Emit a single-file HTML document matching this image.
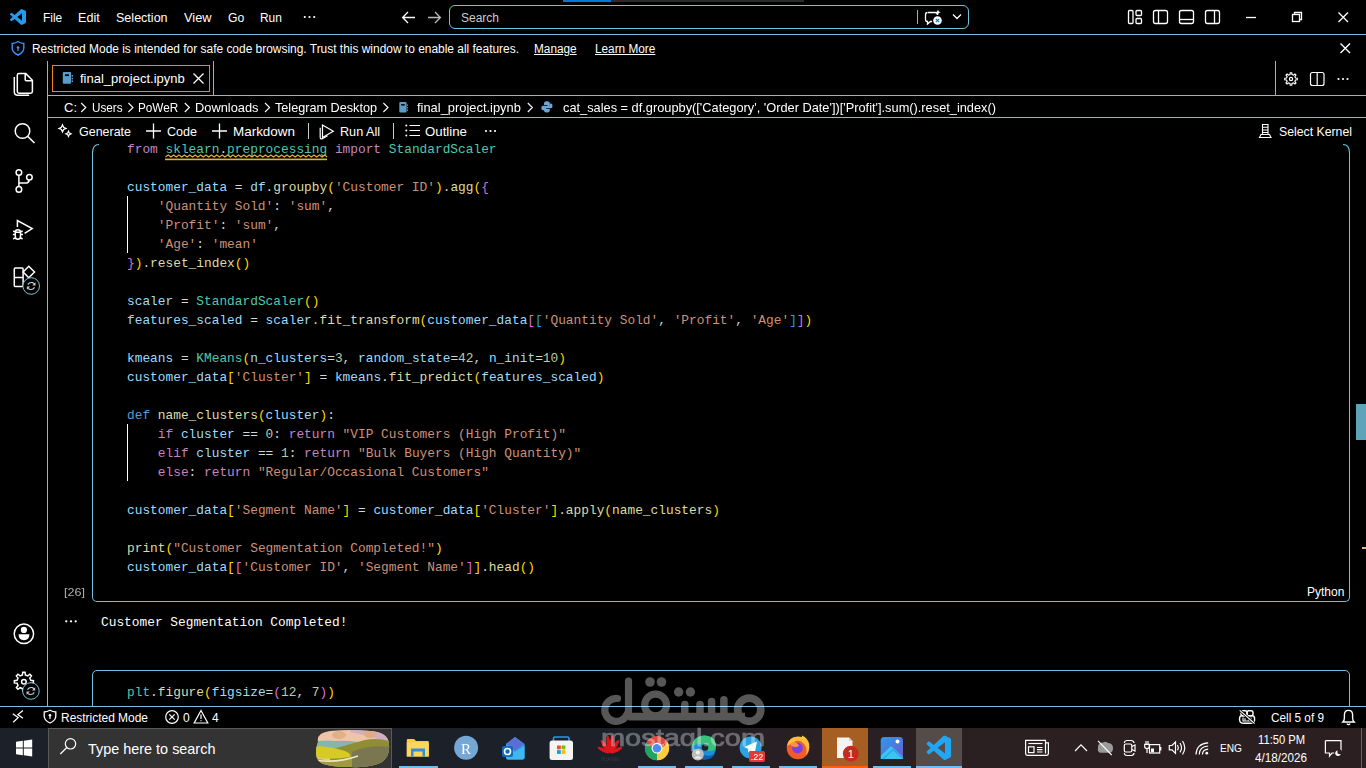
<!DOCTYPE html>
<html><head><meta charset="utf-8">
<style>
*{margin:0;padding:0;box-sizing:border-box}
html,body{width:1366px;height:768px;overflow:hidden;background:#000}
body{position:relative;font-family:"Liberation Sans",sans-serif;color:#fff;font-size:13px}
.a{position:absolute}
.hl{position:absolute;height:1px;background:#6fc3df}
.vl{position:absolute;width:1px;background:#6fc3df}
.t{position:absolute;white-space:pre;line-height:1}
.code{position:absolute;left:127px;font-family:"Liberation Mono",monospace;font-size:12.83px;line-height:19px;white-space:normal;color:#d4d4d4}
.code div{height:19px;white-space:pre}
.kw{color:#c586c0}.cl{color:#4ec9b0}.v{color:#9cdcfe}.fn{color:#dcdcaa}.s{color:#ce9178}.n{color:#b5cea8}.d{color:#569cd6}
.b1{color:#ffd700}.b2{color:#da70d6}.b3{color:#179fff}
svg{position:absolute;overflow:visible}
</style></head><body>

<!-- ===== TITLE BAR ===== -->
<div class="hl" style="left:0;top:34px;width:1366px"></div>
<div class="a" style="left:563px;top:0;width:241px;height:2px;background:#2b2b2b"></div>
<div class="a" style="left:563px;top:0;width:48px;height:2px;background:#0078d4"></div>

<div class="t" style="transform:scaleX(0.9163);transform-origin:0 0;left:43px;top:11px;font-size:13px">File</div>
<div class="t" style="transform:scaleX(0.9685);transform-origin:0 0;left:78px;top:11px;font-size:13px">Edit</div>
<div class="t" style="transform:scaleX(0.9648);transform-origin:0 0;left:116px;top:11px;font-size:13px">Selection</div>
<div class="t" style="transform:scaleX(0.9838);transform-origin:0 0;left:184px;top:11px;font-size:13px">View</div>
<div class="t" style="transform:scaleX(0.9398);transform-origin:0 0;left:228px;top:11px;font-size:13px">Go</div>
<div class="t" style="transform:scaleX(0.9179);transform-origin:0 0;left:260px;top:11px;font-size:13px">Run</div>

<!-- search box -->
<div class="a" style="left:449px;top:5px;width:520px;height:24px;border:1px solid #6fc3df;border-radius:6px"></div>
<div class="t" style="left:461px;top:12px;font-size:12px;color:#ccc">Search</div>
<div class="a" style="left:917px;top:10px;width:1px;height:14px;background:#6fc3df"></div>

<!-- ===== BANNER ===== -->
<div class="t" style="transform:scaleX(0.9947);transform-origin:0 0;left:32px;top:43px;font-size:12px">Restricted Mode is intended for safe code browsing. Trust this window to enable all features.</div>
<div class="t" style="transform:scaleX(0.9844);transform-origin:0 0;left:534px;top:43px;font-size:12px;text-decoration:underline">Manage</div>
<div class="t" style="transform:scaleX(0.9825);transform-origin:0 0;left:595px;top:43px;font-size:12px;text-decoration:underline">Learn More</div>

<!-- ===== EDITOR FRAME ===== -->
<div class="vl" style="left:47px;top:61px;height:645px"></div>
<div class="hl" style="left:47px;top:95px;width:1319px"></div>
<div class="hl" style="left:47px;top:117px;width:1319px"></div>
<div class="vl" style="left:213px;top:61px;height:34px"></div>
<div class="vl" style="left:1275px;top:61px;height:34px"></div>

<!-- tab -->
<div class="a" style="left:52px;top:65px;width:158px;height:27px;border:1px solid #f38518"></div>
<div class="t" style="transform:scaleX(0.9991);transform-origin:0 0;left:80px;top:72px;font-size:13px">final_project.ipynb</div>

<!-- breadcrumb -->
<div class="t" style="left:64px;top:101px;font-size:13px;color:#fff">C:</div>

<!-- toolbar -->
<div class="t" style="transform:scaleX(0.9594);transform-origin:0 0;left:79px;top:125px">Generate</div>
<div class="t" style="transform:scaleX(0.9653);transform-origin:0 0;left:167px;top:125px">Code</div>
<div class="t" style="transform:scaleX(1.0339);transform-origin:0 0;left:233px;top:125px">Markdown</div>
<div class="a" style="left:308px;top:123px;width:1px;height:16px;background:#ccc"></div>
<div class="t" style="transform:scaleX(0.9708);transform-origin:0 0;left:340px;top:125px">Run All</div>
<div class="a" style="left:393px;top:123px;width:1px;height:16px;background:#ccc"></div>
<div class="t" style="transform:scaleX(1.0193);transform-origin:0 0;left:425px;top:125px">Outline</div>
<div class="t" style="transform:scaleX(0.9440);transform-origin:0 0;left:1279px;top:125px">Select Kernel</div>

<!-- ===== NOTEBOOK ===== -->
<div class="a" style="left:48px;top:144px;width:1318px;height:562px;overflow:hidden">
  <div class="a" style="left:44px;top:9px;width:1258px;height:449px;border:1px solid #6fc3df;border-top:none;border-radius:0 0 5px 5px"></div>
  <div class="a" style="left:44px;top:526px;width:1258px;height:100px;border:1px solid #6fc3df;border-radius:5px"></div>
  <div class="code" style="left:79px;top:-4px">
<div><span class="kw">from</span> <span class="cl">sklearn</span>.<span class="cl">preprocessing</span> <span class="kw">import</span> <span class="cl">StandardScaler</span></div>
<div></div>
<div><span class="v">customer_data</span> = <span class="v">df</span>.<span class="fn">groupby</span><span class="b1">(</span><span class="s">'Customer ID'</span><span class="b1">)</span>.<span class="fn">agg</span><span class="b1">(</span><span class="b2">{</span></div>
<div>    <span class="s">'Quantity Sold'</span>: <span class="s">'sum'</span>,</div>
<div>    <span class="s">'Profit'</span>: <span class="s">'sum'</span>,</div>
<div>    <span class="s">'Age'</span>: <span class="s">'mean'</span></div>
<div><span class="b2">}</span><span class="b1">)</span>.<span class="fn">reset_index</span><span class="b1">()</span></div>
<div></div>
<div><span class="v">scaler</span> = <span class="cl">StandardScaler</span><span class="b1">()</span></div>
<div><span class="v">features_scaled</span> = <span class="v">scaler</span>.<span class="fn">fit_transform</span><span class="b1">(</span><span class="v">customer_data</span><span class="b2">[</span><span class="b3">[</span><span class="s">'Quantity Sold'</span>, <span class="s">'Profit'</span>, <span class="s">'Age'</span><span class="b3">]</span><span class="b2">]</span><span class="b1">)</span></div>
<div></div>
<div><span class="v">kmeans</span> = <span class="cl">KMeans</span><span class="b1">(</span><span class="v">n_clusters</span>=<span class="n">3</span>, <span class="v">random_state</span>=<span class="n">42</span>, <span class="v">n_init</span>=<span class="n">10</span><span class="b1">)</span></div>
<div><span class="v">customer_data</span><span class="b1">[</span><span class="s">'Cluster'</span><span class="b1">]</span> = <span class="v">kmeans</span>.<span class="fn">fit_predict</span><span class="b1">(</span><span class="v">features_scaled</span><span class="b1">)</span></div>
<div></div>
<div><span class="d">def</span> <span class="fn">name_clusters</span><span class="b1">(</span><span class="v">cluster</span><span class="b1">)</span>:</div>
<div>    <span class="kw">if</span> <span class="v">cluster</span> == <span class="n">0</span>: <span class="kw">return</span> <span class="s">"VIP Customers (High Profit)"</span></div>
<div>    <span class="kw">elif</span> <span class="v">cluster</span> == <span class="n">1</span>: <span class="kw">return</span> <span class="s">"Bulk Buyers (High Quantity)"</span></div>
<div>    <span class="kw">else</span>: <span class="kw">return</span> <span class="s">"Regular/Occasional Customers"</span></div>
<div></div>
<div><span class="v">customer_data</span><span class="b1">[</span><span class="s">'Segment Name'</span><span class="b1">]</span> = <span class="v">customer_data</span><span class="b1">[</span><span class="s">'Cluster'</span><span class="b1">]</span>.<span class="fn">apply</span><span class="b1">(</span><span class="fn">name_clusters</span><span class="b1">)</span></div>
<div></div>
<div><span class="fn">print</span><span class="b1">(</span><span class="s">"Customer Segmentation Completed!"</span><span class="b1">)</span></div>
<div><span class="v">customer_data</span><span class="b1">[</span><span class="b2">[</span><span class="s">'Customer ID'</span>, <span class="s">'Segment Name'</span><span class="b2">]</span><span class="b1">]</span>.<span class="fn">head</span><span class="b1">()</span></div>
  </div>
  <!-- indent guides -->
  <div class="a" style="left:79px;top:52px;width:1px;height:57px;background:#fff"></div>
  <div class="a" style="left:79px;top:280px;width:1px;height:57px;background:#fff"></div>
  <div class="t" style="transform:scaleX(1.0945);transform-origin:0 0;left:64px;top:587px;font-family:'Liberation Sans',sans-serif;font-size:11.5px;color:#b0b0b0;position:fixed">[26]</div>
  <div class="t" style="left:1259px;top:442px;font-size:12px;color:#fff">Python</div>
  
  <div class="t" style="left:53px;top:473px;font-family:'Liberation Mono',monospace;font-size:12.83px;color:#fff">Customer Segmentation Completed!</div>
  <div class="code" style="left:79px;top:539px"><div><span class="cl">plt</span>.<span class="fn">figure</span><span class="b1">(</span><span class="v">figsize</span>=<span class="b2">(</span><span class="n">12</span>, <span class="n">7</span><span class="b2">)</span><span class="b1">)</span></div></div>
</div>

<!-- ===== STATUS BAR ===== -->
<div class="hl" style="left:0;top:706px;width:1366px"></div>
<div class="t" style="transform:scaleX(0.9957);transform-origin:0 0;left:61px;top:712px;font-size:12px">Restricted Mode</div>
<div class="t" style="left:183px;top:712px;font-size:12px">0</div>
<div class="t" style="left:212px;top:712px;font-size:12px">4</div>
<div class="t" style="transform:scaleX(0.9809);transform-origin:0 0;left:1271px;top:712px;font-size:12px">Cell 5 of 9</div>

<!-- ===== TASKBAR ===== -->
<div class="a" style="left:0;top:728px;width:1366px;height:40px;background:linear-gradient(90deg,#1b2029 0%,#1c2029 46%,#2a1f22 60%,#2c1f21 100%)"></div>
<div class="a" style="left:48px;top:728px;width:344px;height:40px;background:#333;border:1px solid #595959;border-bottom:none"></div>
<div class="t" style="transform:scaleX(0.9609);transform-origin:0 0;left:88px;top:741px;font-size:15px;color:#fff">Type here to search</div>


<!-- ===== ICONS LAYER 1 ===== -->
<svg style="left:0;top:0" width="1366" height="728" viewBox="0 0 1366 728">
<!-- VS Code logo -->
<path transform="translate(10 9) scale(0.16)" fill="#1f9cf0" d="M96.46 10.8 75.86.87a6.23 6.23 0 0 0-7.1 1.2L29.33 38.04 12.15 25a4.16 4.16 0 0 0-5.32.24L1.3 30.26a4.16 4.16 0 0 0 0 6.16L16.2 50 1.3 63.58a4.16 4.16 0 0 0 0 6.16l5.52 5.02a4.16 4.16 0 0 0 5.32.24l17.18-13.04 39.43 35.96a6.23 6.23 0 0 0 7.1 1.2l20.6-9.92a6.24 6.24 0 0 0 3.54-5.62V16.42a6.24 6.24 0 0 0-3.54-5.62zM75.02 72.7 45.1 50l29.92-22.7z"/>
<g fill="none" stroke="#fff" stroke-width="1.3">
<!-- nav arrows -->
<path d="M408 12 L402.6 17.5 L408 23 M402.6 17.5 H415"/>
<path d="M435 12 L440.4 17.5 L435 23 M428 17.5 H440.4" stroke="#bbb"/>
<!-- copilot -->
<path d="M928 12.5 H935 Q937.5 12.5 937.5 15 M927.5 12.5 Q925.5 12.5 925.5 15 V19.5 Q925.5 21.5 927.5 21.5 V24 L930.5 21.5 H932"/>
<path d="M938 9.5 L938.8 11.5 L940.8 12.2 L938.8 13 L938 15 L937.2 13 L935.2 12.2 L937.2 11.5Z" fill="#fff" stroke="none"/>
<circle cx="937.5" cy="20.5" r="4.3" fill="#fff" stroke="none"/>
<path d="M935.8 18.8 L939.2 22.2 M939.2 18.8 L935.8 22.2" stroke="#1a6fb5" stroke-width="1.1"/>
<path d="M953 14.5 L957 18.5 L961 14.5"/>
<!-- layout icons -->
<rect x="1128.5" y="10.5" width="4.5" height="13" rx="1"/>
<rect x="1136" y="10.5" width="5.5" height="5" rx="1"/>
<rect x="1136" y="18.5" width="5.5" height="5" rx="1"/>
<rect x="1153.5" y="10.5" width="14" height="13" rx="2"/><path d="M1158.5 10.5 V23.5"/>
<rect x="1179.5" y="10.5" width="14" height="13" rx="2"/><path d="M1179.5 19.5 H1193.5"/>
<rect x="1205.5" y="10.5" width="14" height="13" rx="2"/><path d="M1214.5 10.5 V23.5"/>
<!-- window controls -->
<path d="M1246 17.5 H1256"/>
<rect x="1292.5" y="14.5" width="7" height="7"/>
<path d="M1294.5 14.5 V12.5 H1301.5 V19.5 H1299.5"/>
<path d="M1338.5 12.5 L1348 22 M1348 12.5 L1338.5 22"/>
<!-- banner close -->
<path d="M1340.5 43.5 L1350 53 M1350 43.5 L1340.5 53" stroke-width="1.4"/>
</g>
<!-- banner shield -->
<path d="M18 41.5 Q21 43.5 23.8 43.5 V48 Q23.8 52.5 18 55 Q12.2 52.5 12.2 48 V43.5 Q15 43.5 18 41.5Z" fill="none" stroke="#3794ff" stroke-width="1.4"/>
<circle cx="18" cy="47.5" r="1.3" fill="#3794ff"/><path d="M18 48 V51" stroke="#3794ff" stroke-width="1.2"/>

<!-- ACTIVITY BAR -->
<g fill="none" stroke="#fff" stroke-width="1.5">
<path d="M25.8 73.6 H19 Q17.3 73.6 17.3 75.3 V91.5 Q17.3 93.2 19 93.2 H30.8 Q32.4 93.2 32.4 91.5 V80.2 Z M25.2 73.8 V79.5 Q25.2 80.8 26.5 80.8 H32.3"/>
<path d="M14.3 77 V91.8 Q14.3 95.3 17.8 95.3 H29.2"/>
<circle cx="22.5" cy="131" r="7.3"/><path d="M27.6 136.2 L34.5 143" stroke-width="1.6"/>
<circle cx="18.9" cy="172.5" r="2.8"/><circle cx="18.9" cy="189.4" r="2.8"/><circle cx="29.4" cy="177.2" r="2.8"/>
<path d="M18.9 175.1 V186.8 M19.5 182.9 H26.5 Q28.8 182.9 29.2 179.8"/>
<path d="M17.4 227 V220.6 L32.2 228.6 L24.6 233.4"/>
<path d="M15.3 232.5 Q15.3 229.8 17.9 229.8 Q20.5 229.8 20.5 232.5 V236.5 Q20.5 239.3 17.9 239.3 Q15.3 239.3 15.3 236.5Z M15.3 232.2 H20.5 M12.8 234.5 H15 M20.8 234.5 H23 M13.2 231 L15.4 232 M22.6 231 L20.4 232 M13.2 239 L15.4 237.7 M22.6 239 L20.4 237.7"/>
<rect x="14.3" y="268" width="8.8" height="18.6" rx="1"/><path d="M14.3 277.5 H23.1"/>
<path d="M28.8 266.3 L34.5 272 L28.8 277.7 L23.1 272Z"/>
<circle cx="23.9" cy="633.8" r="9.7"/>
<circle cx="23.9" cy="629.9" r="3.1" fill="#fff" stroke="none"/>
<path d="M18.6 634.3 H29.4 Q29.4 640.2 23.9 640.2 Q18.6 640.2 18.6 634.3Z" fill="#fff" stroke="none"/>
<path d="M30.74 680.30 L33.43 680.67 L33.43 682.93 L30.74 683.30 L29.80 685.57 L31.44 687.74 L29.84 689.34 L27.67 687.70 L25.40 688.64 L25.03 691.33 L22.77 691.33 L22.40 688.64 L20.13 687.70 L17.96 689.34 L16.36 687.74 L18.00 685.57 L17.06 683.30 L14.37 682.93 L14.37 680.67 L17.06 680.30 L18.00 678.03 L16.36 675.86 L17.96 674.26 L20.13 675.90 L22.40 674.96 L22.77 672.27 L25.03 672.27 L25.40 674.96 L27.67 675.90 L29.84 674.26 L31.44 675.86 L29.80 678.03Z"/>
<circle cx="23.9" cy="681.8" r="2.3"/>
</g>
<!-- sync badges -->
<g>
<circle cx="31.2" cy="286" r="8.3" fill="#000" stroke="#6fc3df" stroke-width="1"/>
<circle cx="30.9" cy="691" r="8.3" fill="#000" stroke="#6fc3df" stroke-width="1"/>
<g fill="none" stroke="#ccc" stroke-width="1.1">
<path d="M27.8 284.6 Q29.5 282 32.5 282.6 Q34 283 34.8 284.3 M34.6 287.4 Q33 290 30 289.4 Q28.4 289 27.6 287.7"/>
<path d="M27.5 689.6 Q29.2 687 32.2 687.6 Q33.7 688 34.5 689.3 M34.3 692.4 Q32.7 695 29.7 694.4 Q28.1 694 27.3 692.7"/>
</g>
<g fill="#ccc"><path d="M35.5 282.3 V285.5 H32.3Z M26.9 289.7 V286.5 H30.1Z M35.2 687.3 V690.5 H32Z M26.6 694.7 V691.5 H29.8Z"/></g>
</g>

<!-- TAB -->
<rect x="62.8" y="72.1" width="8.3" height="11.7" rx="1" fill="#5b9bc9"/>
<rect x="65" y="74.3" width="4" height="1.8" fill="#000"/>
<g fill="#5b9bc9"><rect x="71.6" y="75" width="1.4" height="1.6"/><rect x="71.6" y="77.8" width="1.4" height="1.6"/><rect x="71.6" y="80.4" width="1.4" height="1.6"/></g>
<path d="M193.5 73.5 L203.5 83.5 M203.5 73.5 L193.5 83.5" stroke="#fff" stroke-width="1.3"/>
<!-- tab actions -->
<g fill="none" stroke="#fff" stroke-width="1.2">
<path d="M1295.49 78.01 L1297.26 78.26 L1297.26 79.74 L1295.49 79.99 L1294.87 81.48 L1295.95 82.90 L1294.90 83.95 L1293.48 82.87 L1291.99 83.49 L1291.74 85.26 L1290.26 85.26 L1290.01 83.49 L1288.52 82.87 L1287.10 83.95 L1286.05 82.90 L1287.13 81.48 L1286.51 79.99 L1284.74 79.74 L1284.74 78.26 L1286.51 78.01 L1287.13 76.52 L1286.05 75.10 L1287.10 74.05 L1288.52 75.13 L1290.01 74.51 L1290.26 72.74 L1291.74 72.74 L1291.99 74.51 L1293.48 75.13 L1294.90 74.05 L1295.95 75.10 L1294.87 76.52Z"/>
<circle cx="1291" cy="79" r="1.6"/>
<rect x="1310.5" y="72.5" width="13.5" height="13" rx="2"/><path d="M1317.2 72.5 V85.5"/>
</g>
<g fill="#fff"><circle cx="1338.5" cy="79" r="1.1"/><circle cx="1343" cy="79" r="1.1"/><circle cx="1347.5" cy="79" r="1.1"/></g>

<!-- BREADCRUMB chevrons -->
<g fill="none" stroke="#fff" stroke-width="1.1">
<path d="M81.2 103 L85.8 107.5 L81.2 112 M128.4 103 L133 107.5 L128.4 112 M184.8 103 L189.4 107.5 L184.8 112 M265 103 L269.6 107.5 L265 112 M383.4 103 L388 107.5 L383.4 112 M527.8 103 L532.4 107.5 L527.8 112"/>
</g>
<rect x="399.3" y="102" width="7.3" height="10.5" rx="1" fill="#5b9bc9"/>
<rect x="401.2" y="104" width="3.5" height="1.6" fill="#000"/>
<g fill="#5b9bc9"><rect x="407" y="104.5" width="1" height="1.4"/><rect x="407" y="107" width="1" height="1.4"/><rect x="407" y="109.5" width="1" height="1.4"/></g>
<g fill="#6ba6d6">
<path d="M546.5 101.3 Q544 101.3 544 103.3 V105 H547.5 V105.7 H543 Q541.3 105.7 541.3 108 Q541.3 110.3 543 110.3 H544 V108.8 Q544 107.2 545.6 107.2 H548.3 Q549.8 107.2 549.8 105.7 V103.3 Q549.8 101.3 547.3 101.3Z"/>
<path d="M547.3 112.6 Q549.8 112.6 549.8 110.6 V108.9 H546.3 V108.2 H550.8 Q552.5 108.2 552.5 105.9 Q552.5 103.6 550.8 103.6 H549.8 V105.1 Q549.8 106.7 548.2 106.7 H545.5 Q544 106.7 544 108.2 V110.6 Q544 112.6 546.5 112.6Z"/>
</g>
</svg>

<!-- breadcrumb texts -->
<div class="t" style="transform:scaleX(0.9012);transform-origin:0 0;left:91.5px;top:101px">Users</div>
<div class="t" style="transform:scaleX(0.9021);transform-origin:0 0;left:138.3px;top:101px">PoWeR</div>
<div class="t" style="transform:scaleX(0.9871);transform-origin:0 0;left:195.2px;top:101px">Downloads</div>
<div class="t" style="transform:scaleX(0.9735);transform-origin:0 0;left:275.4px;top:101px">Telegram Desktop</div>
<div class="t" style="transform:scaleX(0.9914);transform-origin:0 0;left:416.6px;top:101px">final_project.ipynb</div>
<div class="t" style="transform:scaleX(0.9839);transform-origin:0 0;left:562.8px;top:101px">cat_sales = df.groupby(['Category', 'Order Date'])['Profit'].sum().reset_index()</div>

<!-- toolbar icons, status icons, misc -->
<svg style="left:0;top:0" width="1366" height="728" viewBox="0 0 1366 728">
<g fill="none" stroke="#fff" stroke-width="1.2">
<!-- generate sparkle -->
<path d="M62.5 124.8 L63.6 127.3 L66.1 128.4 L63.6 129.5 L62.5 132 L61.4 129.5 L58.9 128.4 L61.4 127.3Z"/>
<path d="M68.5 131.2 L69.3 133 L71.1 133.8 L69.3 134.6 L68.5 136.4 L67.7 134.6 L65.9 133.8 L67.7 133Z"/>
<!-- plus icons -->
<path d="M153.5 123.5 V138.5 M146 131 H161 M219.5 123.5 V138.5 M212 131 H227" stroke-width="1.3"/>
<!-- run all -->
<path d="M322.5 125 L333.3 131.2 L322.5 137.5Z"/>
<path d="M320.2 127.8 V137.3 Q320.2 139.6 322.4 138.6 L327.5 135.8"/>
<!-- outline -->
<path d="M409.5 125.5 H420 M409.5 130.5 H420 M409.5 135.5 H420"/>
</g>
<g fill="#fff"><circle cx="406.3" cy="125.5" r="1"/><circle cx="406.3" cy="130.5" r="1"/><circle cx="406.3" cy="135.5" r="1"/>
<circle cx="486" cy="131" r="1.1"/><circle cx="490.5" cy="131" r="1.1"/><circle cx="495" cy="131" r="1.1"/></g>
<!-- title bar dots -->
<g fill="#fff"><circle cx="304.8" cy="17" r="1.1"/><circle cx="309.5" cy="17" r="1.1"/><circle cx="314.2" cy="17" r="1.1"/></g>
<!-- select kernel icon -->
<g fill="none" stroke="#fff" stroke-width="1.1">
<path d="M1262.5 124.5 H1268 V134.5 H1262.5Z M1261 134.5 H1269.5 L1271 137.5 H1259.5Z M1262.5 127.3 H1268 M1262.5 130 H1268 M1262.5 132.5 H1268"/>
</g>
</svg>

<!-- squiggle & cell corners -->
<svg style="left:0;top:0" width="1366" height="728" viewBox="0 0 1366 728">
<path d="M165.5 157 L168.20 155 L170.90 157 L173.60 155 L176.30 157 L179.00 155 L181.70 157 L184.40 155 L187.10 157 L189.80 155 L192.50 157 L195.20 155 L197.90 157 L200.60 155 L203.30 157 L206.00 155 L208.70 157 L211.40 155 L214.10 157 L216.80 155 L219.50 157 L222.20 155 L224.90 157 L227.60 155 L230.30 157 L233.00 155 L235.70 157 L238.40 155 L241.10 157 L243.80 155 L246.50 157 L249.20 155 L251.90 157 L254.60 155 L257.30 157 L260.00 155 L262.70 157 L265.40 155 L268.10 157 L270.80 155 L273.50 157 L276.20 155 L278.90 157 L281.60 155 L284.30 157 L287.00 155 L289.70 157 L292.40 155 L295.10 157 L297.80 155 L300.50 157 L303.20 155 L305.90 157 L308.60 155 L311.30 157 L314.00 155 L316.70 157 L319.40 155 L322.10 157 L324.80 155 L327.00 157" fill="none" stroke="#e2b23a" stroke-width="1.1"/>
<rect x="165" y="158.6" width="162" height="1.6" fill="#e2b23a"/>
<path d="M92.5 153 Q92.5 144.5 99 144.5" fill="none" stroke="#6fc3df" stroke-width="1.1"/>
<path d="M1349.5 153 Q1349.5 144.5 1343 144.5" fill="none" stroke="#6fc3df" stroke-width="1.1"/>
<g fill="#fff"><circle cx="66.3" cy="621.3" r="1.15"/><circle cx="71" cy="621.3" r="1.15"/><circle cx="75.7" cy="621.3" r="1.15"/></g>
<!-- scrollbar -->
<rect x="1356" y="404" width="10" height="36" fill="#5fa3b9"/>
<rect x="1362" y="547" width="4" height="2" fill="#d7ba7d"/>
</svg>

<!-- status bar icons -->
<svg style="left:0;top:0" width="1366" height="728" viewBox="0 0 1366 728">
<g fill="none" stroke="#fff" stroke-width="1.2">
<path d="M12.8 713.7 L18.1 717.6 L13.2 722.3 M22.9 710.4 L17.9 714.6 L22.9 718.3" stroke-width="1.3"/>
<path d="M50 710.3 Q53 712 55.8 712 V716 Q55.8 720.5 50 723 Q44.2 720.5 44.2 716 V712 Q47 712 50 710.3Z" stroke-width="1.3"/>
<circle cx="172" cy="717" r="6.3"/>
<path d="M169.3 714.3 L174.7 719.7 M174.7 714.3 L169.3 719.7"/>
<path d="M201 710.5 L207.8 723 H194.2Z"/>
<path d="M201 714.5 V719 M201 720.3 V721.3"/>
<!-- copilot off -->
<rect x="1241" y="710.7" width="6" height="5" rx="1.8" stroke-width="1.4"/><rect x="1247" y="710.7" width="6" height="5" rx="1.8" stroke-width="1.4"/><path d="M1239.6 720 Q1239.3 716 1241.5 715.8 H1252.5 Q1254.8 716 1254.6 720 Q1254.3 723.3 1250 723.3 H1244 Q1239.8 723.3 1239.6 720Z" stroke-width="1.4"/><path d="M1243 717.5 V721 H1251 V717.5 M1245 718.3 V720.3 M1248.5 718.3 V720.3" stroke-width="1.1"/><path d="M1239.7 710.3 L1254.6 723.5" stroke="#000" stroke-width="2.6"/><path d="M1239.7 710.3 L1254.6 723.5" stroke-width="1.1"/>
<!-- bell -->
<path d="M1342.8 722 H1354.2 Q1352.6 720.5 1352.6 718 V715 Q1352.6 710.3 1348.5 710.3 Q1344.4 710.3 1344.4 715 V718 Q1344.4 720.5 1342.8 722Z M1346.8 723.6 Q1348.5 725.6 1350.2 723.6" stroke-width="1.35"/>
</g>
<circle cx="50" cy="715.3" r="1.3" fill="#fff"/><path d="M50 716 V719" stroke="#fff" stroke-width="1.2"/>
</svg>

<!-- ===== TASKBAR ICONS ===== -->
<div class="a" style="left:822px;top:728px;width:46px;height:40px;background:#a65e23"></div>
<div class="a" style="left:822px;top:766px;width:46px;height:2px;background:#f7630c"></div>
<div class="a" style="left:916px;top:728px;width:46px;height:40px;background:#554c4a"></div>
<div class="a" style="left:399px;top:766px;width:39px;height:2px;background:#76b9ed"></div>
<div class="a" style="left:638px;top:766px;width:38px;height:2px;background:#76b9ed"></div>
<div class="a" style="left:685px;top:766px;width:38px;height:2px;background:#76b9ed"></div>
<div class="a" style="left:732px;top:766px;width:38px;height:2px;background:#76b9ed"></div>
<div class="a" style="left:779px;top:766px;width:38px;height:2px;background:#76b9ed"></div>
<div class="a" style="left:873px;top:766px;width:38px;height:2px;background:#76b9ed"></div>
<div class="a" style="left:916px;top:766px;width:46px;height:2px;background:#76b9ed"></div>
<div class="a" style="left:1361px;top:728px;width:1px;height:40px;background:#6b6060"></div>
<div class="t" style="transform:scaleX(0.8828);transform-origin:0 0;left:1219.5px;top:743px;font-size:11.5px;color:#fff">ENG</div>
<div class="t" style="transform:scaleX(0.9349);transform-origin:0 0;left:1257.5px;top:734px;font-size:12px;color:#fff">11:50 PM</div>
<div class="t" style="transform:scaleX(0.9721);transform-origin:0 0;left:1255px;top:752px;font-size:12px;color:#fff">4/18/2026</div>
<svg style="left:0;top:728px" width="1366" height="40" viewBox="0 728 1366 40">
<defs>
<linearGradient id="sky" x1="0" y1="0" x2="0" y2="1"><stop offset="0" stop-color="#d8b3a6"/><stop offset="0.45" stop-color="#f2c8a0"/><stop offset="0.55" stop-color="#7fb3b3"/><stop offset="1" stop-color="#7fb3b3"/></linearGradient>
<linearGradient id="hill" x1="0" y1="0" x2="1" y2="1"><stop offset="0" stop-color="#d5cf2a"/><stop offset="0.5" stop-color="#9b9a2c"/><stop offset="1" stop-color="#6d6a55"/></linearGradient>
<linearGradient id="photos" x1="0" y1="0" x2="1" y2="1"><stop offset="0" stop-color="#2d9be8"/><stop offset="1" stop-color="#6a5ad0"/></linearGradient>
<clipPath id="blob"><path d="M318 742 Q316 733 330 731 Q350 729 370 731 Q389 732 389 745 Q390 756 382 762 Q372 768 350 767 Q322 767 318 760 Q314 754 318 742Z"/></clipPath>
</defs>
<!-- windows logo -->
<g fill="#fff"><path d="M16 741.8 L22.8 740.8 V747.5 H16Z M23.8 740.7 L32.2 739.5 V747.5 H23.8Z M16 748.5 H22.8 V755.2 L16 754.2Z M23.8 748.5 H32.2 V756.5 L23.8 755.3Z"/></g>
<!-- search icon -->
<g fill="none" stroke="#fff" stroke-width="1.2"><circle cx="70.5" cy="743.8" r="5.2"/><path d="M66.8 747.5 L60.3 754"/></g>
<!-- search highlight -->
<g clip-path="url(#blob)">
<rect x="314" y="729" width="77" height="40" fill="#eec5a5"/>
<path d="M350 729 H392 V745 Q380 738 350 732Z" fill="#c9a8c8" opacity="0.8"/>
<ellipse cx="339" cy="735" rx="7" ry="4" fill="#e2b088"/>
<ellipse cx="370" cy="734" rx="6" ry="4" fill="#e0ac86"/>
<path d="M314 741.5 Q325 740 335 741 Q345 740 358 742 V750 H314Z" fill="#85b5ad"/>
<path d="M330 750 Q350 744 365 740 Q378 737 392 742 V769 H330Z" fill="#8f8d35"/>
<path d="M352 752 Q370 744 392 747 V769 H352Z" fill="#7a7650"/>
<path d="M314 746 Q330 746 345 751 Q352 754 350 757 Q335 760 316 758Z" fill="#d6cb22"/>
<path d="M314 758 Q330 763 352 757 V769 H314Z" fill="#a09a3c"/>
<path d="M318 760.5 Q338 763 358 756" fill="none" stroke="#ece6cc" stroke-width="1.6"/>
</g>
<!-- explorer -->
<path d="M406.8 740 Q406.8 739 407.8 739 H414 L416 741 H428 Q428.8 741 428.8 742 V756.5 H406.8Z" fill="#f8c94c"/>
<path d="M406.8 742.5 H428.8 V756.5 H406.8Z" fill="#fcd660"/>
<path d="M411 748.5 H425 V756.5 H422.5 V751.5 H413.5 V756.5 H411Z" fill="#2f8fd8"/>
<!-- R -->
<circle cx="466.1" cy="747.8" r="12" fill="#75a7d6"/>
<text x="466.1" y="753.5" text-anchor="middle" font-family="Liberation Serif" font-size="15" fill="#fff">R</text>
<!-- outlook -->
<path d="M506 744 L515 737 L524.5 744 V757.5 Q524.5 759.5 522.5 759.5 H508 Q506 759.5 506 757.5Z" fill="#28a8ea"/>
<path d="M506 744 L515 737 L524.5 744 L515 751Z" fill="#5a6fd6"/>
<path d="M506 746 L515 752 L524.5 746 V757.5 Q524.5 759.5 522.5 759.5 H508 Q506 759.5 506 757.5Z" fill="#3fb8f0"/>
<rect x="502" y="746" width="11" height="11" rx="2" fill="#0f6cbd"/>
<circle cx="507.5" cy="751.5" r="3" fill="none" stroke="#fff" stroke-width="1.6"/>
<!-- store -->
<path d="M553.5 741 V738.5 Q553.5 737 555 737 H567.5 Q569 737 569 738.5 V741" fill="none" stroke="#2a9be0" stroke-width="1.6"/>
<rect x="549.6" y="740.5" width="23.4" height="19.5" rx="2.5" fill="#f4f4f4"/>
<rect x="557" y="745.5" width="3.8" height="3.8" fill="#f25022"/><rect x="561.6" y="745.5" width="3.8" height="3.8" fill="#7fba00"/>
<rect x="557" y="750.1" width="3.8" height="3.8" fill="#00a4ef"/><rect x="561.6" y="750.1" width="3.8" height="3.8" fill="#ffb900"/>
<!-- huawei -->
<g fill="#e0151c"><ellipse cx="608.67" cy="744.04" rx="8.75" ry="1.90" transform="rotate(-98.0 608.67 744.04)"/><ellipse cx="611.33" cy="744.04" rx="8.75" ry="1.90" transform="rotate(-82.0 611.33 744.04)"/><ellipse cx="605.22" cy="746.41" rx="7.75" ry="1.90" transform="rotate(-124.0 605.22 746.41)"/><ellipse cx="614.78" cy="746.41" rx="7.75" ry="1.90" transform="rotate(-56.0 614.78 746.41)"/><ellipse cx="603.50" cy="750.19" rx="6.50" ry="1.70" transform="rotate(-153.0 603.50 750.19)"/><ellipse cx="616.50" cy="750.19" rx="6.50" ry="1.70" transform="rotate(-27.0 616.50 750.19)"/></g>
<text x="610" y="760.5" text-anchor="middle" font-family="Liberation Sans" font-size="4.5" fill="#3a3a3a">HUAWEI</text>
<!-- chrome -->
<circle cx="657" cy="748.2" r="12.1" fill="#dd4b3e"/>
<path d="M657 748.2 L667.5 742.15 A12.1 12.1 0 0 1 657 760.3Z" fill="#ffcd40"/>
<path d="M657 748.2 L657 760.3 A12.1 12.1 0 0 1 646.5 742.15Z" fill="#1fa463"/>
<path d="M657 748.2 L667.5 742.15 A12.1 12.1 0 0 1 646.5 742.15 Z" fill="#dd4b3e"/>
<circle cx="657" cy="748.2" r="5.4" fill="#fff"/><circle cx="657" cy="748.2" r="4.3" fill="#4c8bf5"/>
<!-- edge -->
<circle cx="704" cy="747.5" r="12" fill="#1b8fdc"/>
<path d="M692 747 Q693 736 704 735.5 Q715.5 735.5 716 746 Q716 751 710 751 Q705 751 705 748 Q705 744 700 744 Q695 744 692 747Z" fill="#38c17a"/>
<path d="M694 752 Q697 758 705 759.5 Q712 759.5 715 754 Q710 757 704 755 Q698 753 697 748Z" fill="#0e5fb0"/>
<circle cx="705" cy="747.5" r="3.3" fill="#1c2029"/>
<circle cx="697.8" cy="754.4" r="6" fill="#bdbdbd"/>
<circle cx="697.8" cy="752.5" r="2" fill="#f0f0f0"/><path d="M693.8 758.5 Q697.8 754 701.8 758.5Z" fill="#f0f0f0"/>
<!-- telegram -->
<circle cx="750.6" cy="747.5" r="11" fill="#2aa3e0"/>
<path d="M744 747 L757 741.5 L754.5 754 L750.5 750.5 L748 752.5 L748.3 749Z" fill="#fff"/>
<rect x="749" y="751" width="16" height="11" rx="2" fill="#e53935"/>
<text x="757" y="760" text-anchor="middle" font-family="Liberation Sans" font-size="9" fill="#fff">.22</text>
<!-- firefox -->
<circle cx="798" cy="748" r="11.3" fill="#f15a2a"/>
<path d="M787 746 Q788 737 798 736.5 Q806 736.5 809 744 Q810 750 806 755 Q808 747 803 743 Q800 740 796 741Z" fill="#ffbd3e"/>
<path d="M802 735.5 Q808 738 809.5 745 Q807 739 802 738Z" fill="#ffcf3a"/>
<circle cx="797.5" cy="748" r="5.3" fill="#7542e5"/>
<path d="M790 744 Q793 749 799 746 Q797 742 793 742Z" fill="#ff9640"/>
<!-- doc w/ badge -->
<path d="M837 737.5 H849 L852.5 741 V758 H837Z" fill="#f3f3f3"/>
<path d="M849 737.5 V741 H852.5Z" fill="#cfcfcf"/>
<circle cx="850.8" cy="753.7" r="7.9" fill="#c42b1c"/>
<text x="850.8" y="757.8" text-anchor="middle" font-family="Liberation Sans" font-size="11" fill="#fff">1</text>
<!-- photos -->
<rect x="880.7" y="737" width="22.3" height="22" rx="3.5" fill="url(#photos)"/>
<path d="M880.7 756 L891 746 L903 757 V759 H880.7Z" fill="#3ec3f5"/>
<path d="M883 759 L893 749.5 L903 758.5" fill="none" stroke="#2aa0e8" stroke-width="1.2"/>
<circle cx="897.5" cy="741.5" r="2" fill="#fff"/>
<!-- vscode -->
<path transform="translate(926.6 735.6) scale(0.245)" fill="#22a6f2" d="M96.46 10.8 75.86.87a6.23 6.23 0 0 0-7.1 1.2L29.33 38.04 12.15 25a4.16 4.16 0 0 0-5.32.24L1.3 30.26a4.16 4.16 0 0 0 0 6.16L16.2 50 1.3 63.58a4.16 4.16 0 0 0 0 6.16l5.52 5.02a4.16 4.16 0 0 0 5.32.24l17.18-13.04 39.43 35.96a6.23 6.23 0 0 0 7.1 1.2l20.6-9.92a6.24 6.24 0 0 0 3.54-5.62V16.42a6.24 6.24 0 0 0-3.54-5.62zM75.02 72.7 45.1 50l29.92-22.7z"/>
<!-- tray -->
<g fill="none" stroke="#fff" stroke-width="1.2">
<path d="M1025.6 740.4 H1045.5 V742.8 H1048.4 V753.6 Q1048.4 755.3 1046.7 755.3 H1027.3 Q1025.6 755.3 1025.6 753.6Z M1045.5 742.8 V753.5"/>
<path d="M1028.4 743.5 H1042.5"/>
<rect x="1028.5" y="746.8" width="5.5" height="5.8"/>
<path d="M1037 747.5 H1042.5 M1037 749.7 H1042.5 M1037 752 H1042.5"/>
<path d="M1075 751 L1081 744.8 L1087 751"/>
<path d="M1124.5 743 Q1124 741 1127 740.5 H1131.5 Q1134 741 1134 743 M1124.5 753 Q1124 755 1127 755.5 H1131.5 Q1134 755 1134 753"/>
<rect x="1124.3" y="744" width="7.5" height="8" rx="1.5"/><path d="M1131.8 746.5 L1135 745 V751 L1131.8 749.5"/>
<path d="M1146 741 V744.3 M1148 741 V744.3 M1144.7 744.3 H1149.3 V746.5 Q1149.3 748.5 1147 748.5 Q1144.7 748.5 1144.7 746.5Z M1147 748.5 V753"/>
<rect x="1149.5" y="744.6" width="10.2" height="8.4"/><path d="M1160.6 747 V750.5" stroke-width="1.5"/>
<path d="M1169.3 745.5 H1172 L1175.5 742 V753.3 L1172 749.8 H1169.3Z"/>
<path d="M1177.5 745 Q1179 747.5 1177.5 750.3 M1180 743 Q1183 747.7 1180 752.3 M1182.5 741 Q1187 747.7 1182.5 754.5"/>
<path d="M1196 754.5 Q1196.5 743.5 1208.2 742.8 M1199.2 754.5 Q1199.5 746.5 1208.2 746 M1202.4 754.5 Q1202.6 749.5 1208.2 749.2"/>
<path d="M1325.4 740.7 H1341 V751.5 M1334.5 753 H1332 L1329.5 756 V753 H1325.4 V740.7"/>
</g>
<rect x="1151" y="748.5" width="3" height="3.8" fill="#fff"/>
<circle cx="1338" cy="753.3" r="3.6" fill="#2c1f21"/><circle cx="1338" cy="753.3" r="2.7" fill="#fff"/><circle cx="1339.6" cy="751.9" r="2.3" fill="#2c1f21"/>
<circle cx="1206.8" cy="753.2" r="1.4" fill="#fff"/>
<path d="M1098 747 Q1098 742.5 1103 742.5 Q1105.5 741 1108 743 Q1112.5 743 1113 747.5 Q1113.3 752.8 1109 752.8 H1101 Q1097 752.8 1098 747Z" fill="#9a9a9a"/>
<path d="M1098 740.8 L1111.7 755" stroke="#fff" stroke-width="1.1"/>
</svg>

<!-- ===== WATERMARK ===== -->
<svg style="left:0;top:0" width="1366" height="768" viewBox="0 0 1366 768">
<g opacity="0.34" fill="none" stroke="#fff" stroke-linecap="round">
<line x1="628.5" y1="681" x2="628.5" y2="716" stroke-width="7.2"/>
<path d="M617.5 698.5 A11.5 11.5 0 1 0 627.1 713.9" stroke-width="7.2"/>
<line x1="628.5" y1="716.6" x2="745" y2="716.6" stroke-width="7.8" stroke-linecap="butt"/>
<circle cx="655.6" cy="705" r="10.9" stroke-width="7.2"/>
<circle cx="749.25" cy="709.7" r="11.6" stroke-width="7.7"/>
<line x1="684.8" y1="704.4" x2="684.8" y2="716" stroke-width="7.5"/>
<line x1="700" y1="704.4" x2="700" y2="716" stroke-width="7.5"/>
<line x1="711.6" y1="701.6" x2="711.6" y2="716" stroke-width="7.5"/>
<line x1="723.9" y1="699.8" x2="723.9" y2="716" stroke-width="7.5"/>
<g fill="#fff" stroke="none">
<circle cx="650" cy="682" r="4.8"/><circle cx="661.5" cy="682" r="4.8"/>
<circle cx="678.6" cy="692" r="4.7"/><circle cx="690.4" cy="692" r="4.7"/>
</g>
<text x="601" y="746.4" fill="#fff" stroke="#fff" stroke-width="0.7" font-family="Liberation Sans" font-size="23" textLength="164" lengthAdjust="spacingAndGlyphs">mostaql.com</text>
</g>
</svg>

</body></html>
